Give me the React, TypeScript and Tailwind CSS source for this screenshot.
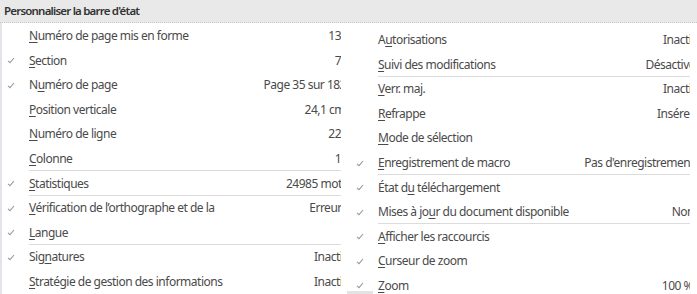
import React from 'react';

type Item = {
  label: React.ReactNode;
  value?: string;
  checked?: boolean;
  sep?: boolean;
  shift?: string;
};

const U = ({ children }: { children: React.ReactNode }) => <span className="underline underline-offset-2">{children}</span>;

const leftItems: Item[] = [
  { label: <><U>N</U>uméro de page mis en forme</>, value: '13' },
  { label: <><U>S</U>ection</>, value: '7', checked: true },
  { label: <>N<U>u</U>méro de page</>, value: 'Page 35 sur 182', checked: true, shift: 'translate-x-[5px]' },
  { label: <><U>P</U>osition verticale</>, value: '24,1 cm', shift: 'translate-x-[4px]' },
  { label: <><U>N</U>uméro de ligne</>, value: '22' },
  { label: <><U>C</U>olonne</>, value: '1', sep: true },
  { label: <><U>S</U>tatistiques</>, value: '24985 mots', checked: true, sep: true, shift: 'translate-x-[6px]' },
  { label: <><U>V</U>érification de l’orthographe et de la</>, value: 'Erreurs', checked: true, shift: 'translate-x-[6px]' },
  { label: <><U>L</U>angue</>, checked: true, sep: true },
  { label: <>Sig<U>n</U>atures</>, value: 'Inactif', checked: true, shift: 'translate-x-[5px]' },
  { label: <><U>S</U>tratégie de gestion des informations</>, value: 'Inactif', shift: 'translate-x-[5px]' },
];

const rightItems: Item[] = [
  { label: <>A<U>u</U>torisations</>, value: 'Inactif', shift: 'translate-x-[5px]' },
  { label: <><U>S</U>uivi des modifications</>, value: 'Désactivé', sep: true, shift: 'translate-x-[5px]' },
  { label: <><U>V</U>err. maj.</>, value: 'Inactif', shift: 'translate-x-[5px]' },
  { label: <><U>R</U>efrappe</>, value: 'Insérer', shift: 'translate-x-[4px]' },
  { label: <><U>M</U>ode de sélection</> },
  { label: <><U>E</U>nregistrement de macro</>, value: "Pas d'enregistrement", checked: true, sep: true, shift: 'translate-x-[4px]' },
  { label: <>État d<U>u</U> téléchargement</>, checked: true },
  { label: <>Mises à jo<U>u</U>r du document disponible</>, value: 'Non', checked: true, sep: true, shift: 'translate-x-[4px]' },
  { label: <><U>A</U>fficher les raccourcis</>, checked: true },
  { label: <><U>C</U>urseur de zoom</>, checked: true },
  { label: <><U>Z</U>oom</>, value: '100 %', checked: true, shift: 'translate-x-[3px]' },
];

const Check = () => (
  <svg width="8" height="7" viewBox="0 0 8 7" className="block">
    <path d="M1 3.8 L3 5.6 L7 1" fill="none" stroke="#9a9a9a" strokeWidth="1.1" />
  </svg>
);

const Row = ({ item, side }: { item: Item; side: 'left' | 'right' }) => (
  <div className="relative flex h-[24.55px] items-center">
    <div className={side === 'left' ? 'w-[27px] shrink-0 pl-[5px]' : 'w-[31px] shrink-0 pl-[9px]'}>
      {item.checked && <Check />}
    </div>
    <div className="flex-1 whitespace-nowrap">{item.label}</div>
    {item.value && (
      <div className="flex justify-end overflow-hidden whitespace-nowrap">
        <span className={item.shift ?? ''}>{item.value}</span>
      </div>
    )}
    {item.sep && (
      <div className={side === 'left' ? 'absolute bottom-0 left-[27px] right-0 h-px bg-[#dcdcdc]' : 'absolute bottom-0 left-[31px] right-0 h-px bg-[#dcdcdc]'} />
    )}
  </div>
);

export default function App() {
  return (
    <div className="relative h-[294px] w-[697px] overflow-hidden bg-white text-[12px] text-[#4a4a4a] [font-family:'Noto_Sans',sans-serif] tracking-[-0.5px]">
      <div className="flex h-[23px] items-center border-b border-dotted border-[#c9c9c9] bg-[#e9e9e9] pl-[4px] text-[11.5px] font-semibold tracking-[-0.8px] text-[#333333]">
        Personnaliser la barre d'état
      </div>
      <div className="flex">
        <div className="w-[341px] border-l-2 border-[#e2e6eb] pt-px">
          {leftItems.map((it, i) => (
            <Row key={i} item={it} side="left" />
          ))}
        </div>
        <div className="ml-[6px] w-[343px] pt-[5px]">
          {rightItems.map((it, i) => (
            <Row key={i} item={it} side="right" />
          ))}
        </div>
      </div>
      <div className="absolute bottom-0 left-[347px] h-[3px] w-[26px] bg-[#e3e3e3]" />
    </div>
  );
}
